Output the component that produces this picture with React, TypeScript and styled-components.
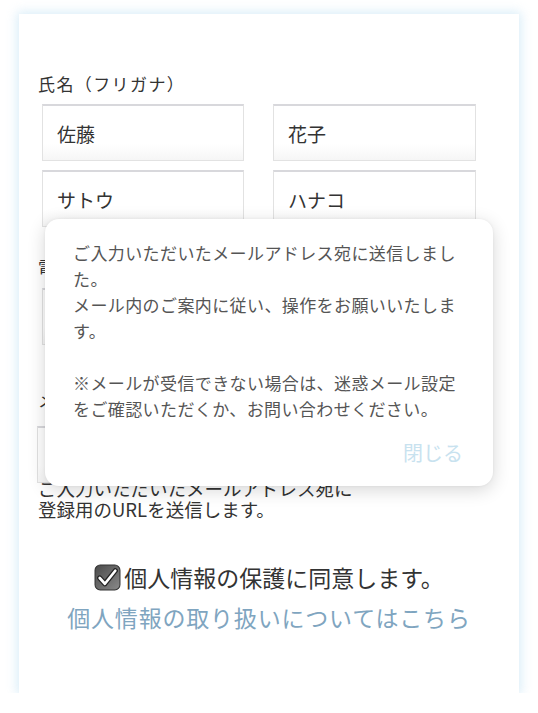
import React from "react"
import styled, { createGlobalStyle } from "styled-components"

const GlobalStyle = createGlobalStyle`
    html, body {
        margin: 0;
        padding: 0;
        background: #ffffff;
        font-family: "Noto Sans CJK JP", "Noto Sans", sans-serif;
        color: #333333;
    }
`

const Card = styled.div`
    position: relative;
    box-sizing: border-box;
    margin: 14px 19px 0;
    width: 500px;
    height: 679px;
    padding: 58px 19px 0;
    background: #ffffff;
    box-shadow: 0 0 10px 2px rgba(170, 215, 240, 0.45);
    overflow: hidden;
`

const Label = styled.div<{ top?: number }>`
    margin-top: ${(p) => p.top ?? 0}px;
    font-size: 17px;
    line-height: 24px;
    letter-spacing: 1.4px;
    color: #333333;
`

const InputRow = styled.div<{ top?: number }>`
    display: grid;
    grid-template-columns: 202px 203px;
    column-gap: 29px;
    margin-top: ${(p) => p.top ?? 0}px;
    padding-left: 4px;
`

const Input = styled.div<{ wide?: boolean }>`
    box-sizing: border-box;
    height: 57px;
    width: ${(p) => (p.wide ? "440px" : "auto")};
    margin-left: ${(p) => (p.wide ? "-5px" : "0")};
    padding: 0 14px;
    display: flex;
    align-items: center;
    border: 1px solid #e2e2e2;
    border-top: 2px solid #d8d8dc;
    background: linear-gradient(#ffffff 70%, #f6f6f6);
    font-size: 19px;
    color: #333333;
`

const Help = styled.div`
    margin-top: -5px;
    font-size: 18.5px;
    line-height: 21px;
    color: #333333;
`

const Agree = styled.div`
    margin-top: 40px;
    display: flex;
    justify-content: center;
    align-items: center;
    gap: 3px;
    font-size: 23px;
    line-height: 34px;
    color: #333333;
`

const PolicyLink = styled.a`
    display: block;
    margin-top: 6px;
    text-align: center;
    font-size: 23px;
    line-height: 34px;
    letter-spacing: 0.8px;
    color: #7fa5c0;
    text-decoration: none;
`

const Modal = styled.div`
    position: absolute;
    left: 26px;
    top: 205px;
    width: 448px;
    box-sizing: border-box;
    padding: 21px 30px 18px 28px;
    background: #ffffff;
    border-radius: 14px;
    box-shadow: 0 4px 18px rgba(0, 0, 0, 0.16), 0 0 3px rgba(0, 0, 0, 0.06);
`

const Message = styled.p`
    margin: 0;
    width: 392px;
    font-size: 17px;
    letter-spacing: 0.4px;
    line-height: 26px;
    color: #555555;
`

const CloseButton = styled.div`
    margin-top: 16px;
    text-align: right;
    font-size: 20px;
    line-height: 30px;
    color: #c8e2ef;
`

const CheckIcon: React.FC = () => (
    <svg width="27" height="27" viewBox="0 0 26 26">
        <defs>
            <linearGradient id="cb" x1="0" y1="0" x2="1" y2="1">
                <stop offset="0" stopColor="#4a4a4a" />
                <stop offset="1" stopColor="#8a8a8a" />
            </linearGradient>
        </defs>
        <rect x="1" y="1" width="24" height="24" rx="5" fill="url(#cb)" stroke="#333" strokeWidth="1" />
        <path d="M5.5 13.5 L10.5 19 L20.5 6.5" fill="none" stroke="#222" strokeWidth="5" strokeLinecap="round" strokeLinejoin="round" />
        <path d="M5.5 13.5 L10.5 19 L20.5 6.5" fill="none" stroke="#fff" strokeWidth="2.6" strokeLinecap="round" strokeLinejoin="round" />
    </svg>
)

const App: React.FC = () => {
    return (
        <>
            <GlobalStyle />
            <Card>
                <Label>氏名（フリガナ）</Label>
                <InputRow top={8}>
                    <Input>佐藤</Input>
                    <Input>花子</Input>
                </InputRow>
                <InputRow top={9}>
                    <Input>サトウ</Input>
                    <Input>ハナコ</Input>
                </InputRow>
                <Label top={28}>電話番号</Label>
                <InputRow top={9}>
                    <Input />
                </InputRow>
                <Label top={43}>メールアドレス</Label>
                <InputRow top={14}>
                    <Input wide />
                </InputRow>
                <Help>
                    ご入力いただいたメールアドレス宛に
                    <br />
                    登録用のURLを送信します。
                </Help>
                <Agree>
                    <CheckIcon />
                    個人情報の保護に同意します。
                </Agree>
                <PolicyLink href="#">個人情報の取り扱いについてはこちら</PolicyLink>

                <Modal>
                    <Message>
                        ご入力いただいたメールアドレス宛に送信しました。
                        <br />
                        メール内のご案内に従い、操作をお願いいたします。
                        <br />
                        <br />
                        ※メールが受信できない場合は、迷惑メール設定をご確認いただくか、お問い合わせください。
                    </Message>
                    <CloseButton>閉じる</CloseButton>
                </Modal>
            </Card>
        </>
    )
}

export default App
